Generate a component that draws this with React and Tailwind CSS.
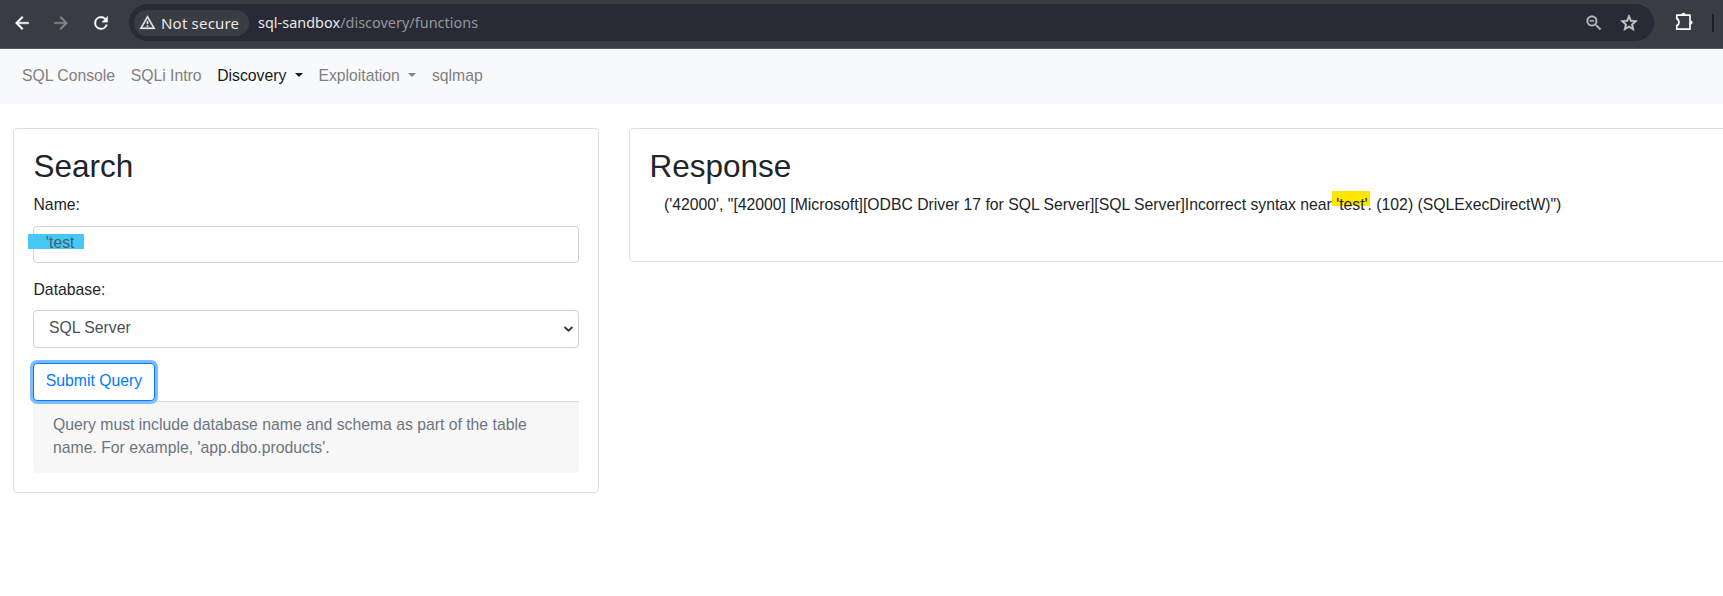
import React from "react";

function Caret() {
  return <span className="ml-[8.5px] h-0 w-0 border-x-[4.5px] border-t-[4.5px] border-x-transparent border-t-current" />;
}

function Toolbar() {
  return (
    <header className="flex h-[49px] shrink-0 items-start border-b border-[#54555c] bg-[#3a3c43] font-['Noto_Sans',sans-serif]">
      <div className="flex h-[46px] w-[129px] shrink-0 items-center pl-[12px] text-white">
        <svg width="20" height="20" viewBox="0 0 24 24" fill="currentColor" stroke="currentColor" strokeWidth="0.5"><path d="M20 11H7.83l5.59-5.59L12 4l-8 8 8 8 1.41-1.41L7.83 13H20z" /></svg>
        <svg className="ml-[19px] text-[#86878c]" width="20" height="20" viewBox="0 0 24 24" fill="currentColor" stroke="currentColor" strokeWidth="0.4"><path d="M12 4l-1.41 1.41L16.17 11H4v2h12.17l-5.58 5.59L12 20l8-8z" /></svg>
        <svg className="ml-[20px]" width="20" height="20" viewBox="0 0 24 24" fill="currentColor" stroke="currentColor" strokeWidth="0.4"><path d="M17.65 6.35A7.96 7.96 0 0 0 12 4a8 8 0 1 0 7.73 10h-2.08A6 6 0 1 1 12 6c1.66 0 3.14.69 4.22 1.78L13 11h7V4z" /></svg>
      </div>
      <div className="mt-[4px] flex h-[37px] w-[1525px] shrink-0 items-center rounded-full bg-[#282a35] pl-[5px] pr-[15px]">
        <div className="flex h-[26px] w-[115px] items-center rounded-full bg-[#3a3c43] pl-[5px] text-[#e8e8ea]">
          <svg width="17" height="17" viewBox="0 0 24 24" fill="currentColor" stroke="currentColor" strokeWidth="0.4"><path d="M12 5.99 19.53 19H4.47zM12 2 1 21h22zm1 14h-2v2h2zm0-6h-2v4h2z" /></svg>
          <span className="ml-[5px] whitespace-nowrap text-[15px] leading-[20px] tracking-[0.2px]">Not secure</span>
        </div>
        <div className="ml-[9px] whitespace-nowrap text-[14.4px] leading-[20px] tracking-[0.04px] text-[#96979d]"><span className="text-[#e8e8ea]">sql-sandbox</span>/discovery/functions</div>
        <svg className="ml-auto text-[#b9babd]" width="20" height="20" viewBox="0 0 24 24" fill="currentColor" stroke="currentColor" strokeWidth="0.3"><path d="M15.5 14h-.79l-.28-.27A6.47 6.47 0 0 0 16 9.5 6.5 6.5 0 1 0 9.5 16c1.61 0 3.09-.59 4.23-1.57l.27.28v.79l5 4.99L20.49 19zm-6 0a4.5 4.5 0 1 1 0-9 4.5 4.5 0 0 1 0 9zM7 8.6h5v1.6H7z" /></svg>
        <svg className="ml-[15px] text-[#c9cacc]" width="20" height="20" viewBox="0 0 24 24" fill="currentColor" stroke="currentColor" strokeWidth="0.7"><path d="m22 9.24-7.19-.62L12 2 9.19 8.63 2 9.24l5.46 4.73L5.82 21 12 17.27 18.18 21l-1.63-7.03zM12 15.4l-3.76 2.27 1-4.28-3.32-2.88 4.38-.38L12 6.1l1.71 4.04 4.38.38-3.32 2.88 1 4.28z" /></svg>
      </div>
      <svg className="ml-[20px] mt-[12px] shrink-0" width="20" height="20" viewBox="0 0 20 20"><path d="M2.8 3.2H16V17.2H2.8V13.6C5.6 12.6 5.6 7.8 2.8 6.8Z" fill="none" stroke="#fff" strokeWidth="1.7" strokeLinejoin="round" /><path d="M7.4 2.8a2.1 2.1 0 0 1 4.2 0zM16.6 8.6a2 2 0 0 1 0 4z" fill="#fff" /></svg>
      <span className="ml-[18px] mt-[14px] h-[18px] w-[2px] shrink-0 bg-[#1b1c26]" />
    </header>
  );
}

export default function App() {
  return (
    <div className="flex h-[596px] w-[1723px] flex-col overflow-hidden bg-white font-['Liberation_Sans',Arial,sans-serif] text-[15.76px] leading-[23px] text-[#212529]">
      <Toolbar />
      <nav className="flex h-[55px] shrink-0 items-center gap-[15.6px] bg-[#f8f9fa] pb-[3px] pl-[22px] text-[#808081]">
        <a>SQL Console</a>
        <a>SQLi Intro</a>
        <a className="flex items-center text-[#19191a]">Discovery<Caret /></a>
        <a className="flex items-center">Exploitation<Caret /></a>
        <a>sqlmap</a>
      </nav>
      <main className="flex items-start gap-[30px] pl-[13px] pt-[24px]">
        <section className="h-[365px] w-[586px] shrink-0 rounded-[4px] border border-[#dfdfdf] px-[19px] pt-[19px]">
          <h2 className="mb-[8px] pl-[0.5px] text-[31.5px] leading-[37px]">Search</h2>
          <label className="block pl-[0.5px]">Name:</label>
          <div className="mt-[10px] h-[37px] rounded-[4px] border border-[#ced4da]">
            <div className="relative -left-[6px] top-[6.5px] flex h-[15px] w-[55.5px] items-center bg-[#45c8f5] pl-[18px] text-[#46606a]"><span className="relative top-[1.5px]">'test</span></div>
          </div>
          <label className="mt-[15px] block pl-[0.5px]">Database:</label>
          <div className="mt-[9px] flex h-[38px] items-center justify-between rounded-[4px] border border-[#ced4da] pl-[15px] pr-[4px] text-[#495057]">
            <span className="-mt-[3px]">SQL Server</span>
            <svg width="11" height="8" viewBox="0 0 11 8"><path d="M1.5 2 5.5 5.7 9.5 2" fill="none" stroke="#343a40" strokeWidth="2" /></svg>
          </div>
          <button className="relative mt-[15px] block h-[38px] w-[122px] whitespace-nowrap rounded-[4px] border border-[#007bff] bg-white pb-[3px] text-[#007bff] shadow-[0_0_0_3px_#80bdff]">Submit Query</button>
          <p className="h-[72px] rounded-b-[3px] border-t border-[#d9d9d9] bg-[#f7f7f7] px-[20px] pt-[11px] text-[#6c757d]">Query must include database name and schema as part of the table<br />name. For example, 'app.dbo.products'.</p>
        </section>
        <section className="h-[134px] w-[1200px] shrink-0 rounded-[4px] border border-[#dfdfdf] pl-[19px] pt-[19px]">
          <h2 className="mb-[8px] pl-[0.5px] text-[31.5px] leading-[37px]">Response</h2>
          <p className="whitespace-nowrap pl-[15px]">('42000', "[42000] [Microsoft][ODBC Driver 17 for SQL Server][SQL Server]Incorrect syntax near <span className="relative isolate"><span className="absolute -left-[4px] -top-[5px] -z-10 h-[15px] w-[38px] bg-[#ffe500]" />'test'</span>. (102) (SQLExecDirectW)")</p>
        </section>
      </main>
    </div>
  );
}
